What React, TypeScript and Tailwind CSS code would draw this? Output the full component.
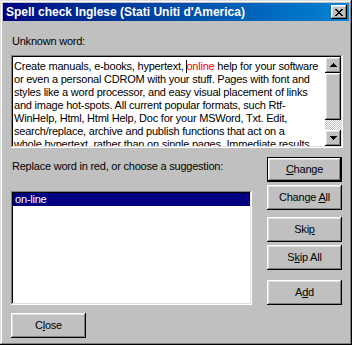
import React from "react";

const raised =
  "bg-[#c0c0c0] shadow-[inset_-1px_-1px_#000,inset_1px_1px_#fff,inset_-2px_-2px_#808080,inset_2px_2px_#dfdfdf]";
const sunken =
  "shadow-[inset_-1px_-1px_#fff,inset_1px_1px_#808080,inset_-2px_-2px_#dfdfdf,inset_2px_2px_#000]";

function Btn({ children, def, mt }: { children: React.ReactNode; def?: boolean; mt?: string }) {
  if (def) {
    return (
      <div className={`w-[75px] h-[25px] border border-black ${mt ?? ""}`}>
        <div className={`w-full h-full flex items-center justify-center text-black ${raised}`}>{children}</div>
      </div>
    );
  }
  return (
    <div className={`w-[75px] h-[25px] flex items-center justify-center text-black ${raised} ${mt ?? ""}`}>
      {children}
    </div>
  );
}

function Arrow({ up }: { up?: boolean }) {
  return (
    <svg width="7" height="4" viewBox="0 0 7 4">
      {up ? <path d="M3 0h1v1h1v1h1v1h1v1H0V3h1V2h1V1h1z" fill="#000" /> : <path d="M0 0h7v1H6v1H5v1H4v1H3V3H2V2H1V1H0z" fill="#000" />}
    </svg>
  );
}

const lines: React.ReactNode[] = [
  <>
    Create manuals, e-books, hypertext, <span className="inline-block w-px h-[13px] bg-black align-[-3px] -mr-px" />
    <span className="text-[#ff0000]">online</span> help for your software
  </>,
  "or even a personal CDROM with your stuff. Pages with font and",
  "styles like a word processor, and easy visual placement of links",
  "and image hot-spots. All current popular formats, such Rtf-",
  "WinHelp, Html, Html Help, Doc for your MSWord, Txt. Edit,",
  "search/replace, archive and publish functions that act on a",
  "whole hypertext, rather than on single pages. Immediate results",
];

export default function App() {
  return (
    <div
      className={`w-[352px] h-[345px] p-[3px] flex flex-col bg-[#c0c0c0] text-[11px] leading-[13px] text-black font-['Liberation_Sans',Arial,sans-serif] shadow-[inset_-1px_-1px_#000,inset_1px_1px_#dfdfdf,inset_-2px_-2px_#808080,inset_2px_2px_#fff]`}
    >
      {/* Title bar */}
      <div className="h-[18px] flex items-center justify-between pl-[3px] pr-[2px] bg-gradient-to-r from-[#000080] to-[#1084d0]">
        <span className="text-white font-bold text-[12px] leading-[14px] font-['Liberation_Sans',Arial,sans-serif]">
          Spell check Inglese (Stati Uniti d'America)
        </span>
        <div className={`w-[16px] h-[14px] flex items-center justify-center ${raised}`}>
          <svg width="8" height="7" viewBox="0 0 8 7">
            <path d="M0 0h2v1h1v1h2V1h1V0h2v1H7v1H6v1H5v1h1v1h1v1h1v1H6V6H5V5H3v1H2v1H0V6h1V5h1V4h1V3H2V2H1V1H0z" fill="#000" />
          </svg>
        </div>
      </div>

      <div className="flex flex-col pl-[8px] pr-[6px] tracking-[-0.22px]">
        <div className="mt-[14px] h-[13px] pl-[1px]">Unknown word:</div>

        {/* Text area */}
        <div className={`mt-[7px] h-[93px] p-[2px] flex bg-white ${sunken}`}>
          <div className="flex-1 overflow-hidden pl-[1px] pt-[3px]">
            {lines.map((l, i) => (
              <div key={i} className="whitespace-nowrap h-[13px]">
                {l}
              </div>
            ))}
          </div>
          <div className="w-[16px] flex flex-col">
            <div className={`w-[16px] h-[16px] flex items-center justify-center ${raised}`}>
              <Arrow up />
            </div>
            <div className={`w-[16px] h-[47px] ${raised}`} />
            <div className="flex-1 bg-[repeating-conic-gradient(#fff_0_25%,#c0c0c0_0_50%)] bg-[length:2px_2px]" />
            <div className={`w-[16px] h-[16px] flex items-center justify-center ${raised}`}>
              <Arrow />
            </div>
          </div>
        </div>

        {/* Lower section */}
        <div className="mt-[9px] flex justify-between pr-[1px]">
          <div className="flex flex-col">
            <div className="mt-[3px] h-[13px] pl-[1px]">Replace word in red, or choose a suggestion:</div>
            <div className={`mt-[18px] w-[241px] h-[114px] p-[2px] bg-white ${sunken}`}>
              <div className="h-[13px] bg-[#000080] text-white pl-[2px]">on-line</div>
            </div>
          </div>
          <div className="flex flex-col">
            <Btn def>
              <span>
                <u>C</u>hange
              </span>
            </Btn>
            <Btn mt="mt-[3px]">
              <span>
                Change <u>A</u>ll
              </span>
            </Btn>
            <Btn mt="mt-[7px]">
              <span>
                Ski<u>p</u>
              </span>
            </Btn>
            <Btn mt="mt-[3px]">
              <span>
                S<u>k</u>ip All
              </span>
            </Btn>
            <Btn mt="mt-[10px]">
              <span>
                A<u>d</u>d
              </span>
            </Btn>
          </div>
        </div>

        <div className="mt-[8px]">
          <Btn>
            <span>
              C<u>l</u>ose
            </span>
          </Btn>
        </div>
      </div>
    </div>
  );
}
